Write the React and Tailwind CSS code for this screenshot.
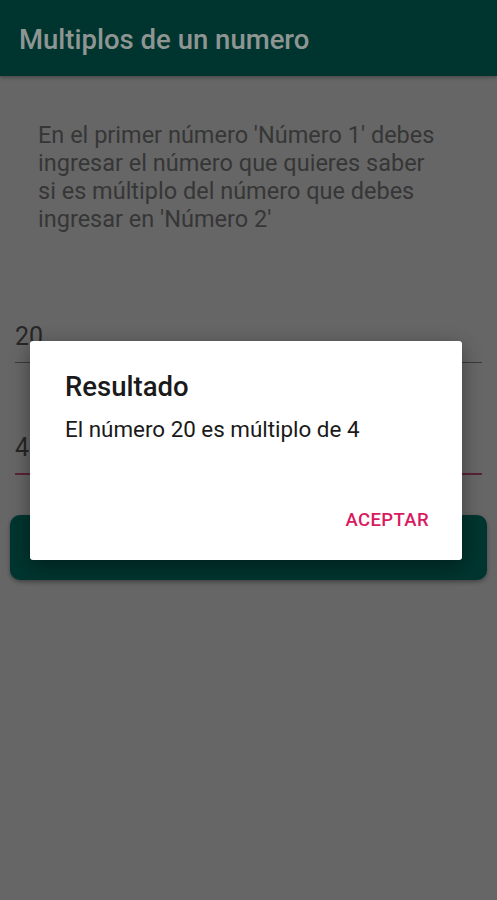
export default function App() {
  return (
    <div className="relative w-[497px] h-[900px] bg-[#666666] overflow-hidden" style={{ fontFamily: 'Roboto, "Noto Sans", sans-serif' }}>
      {/* app bar */}
      <header className="h-[76px] bg-[#00352f] flex items-center px-[19px] pt-[3px] shadow-[0_2px_3px_rgba(0,0,0,0.25)]">
        <h1 className="text-[27.5px] font-medium text-[#8f9593]">Multiplos de un numero</h1>
      </header>

      {/* form */}
      <main className="px-[15px]">
        <p className="w-[410px] pt-[45px] ml-[23px] text-[23.5px] leading-[28px] text-[#363636]">
          En el primer número 'Número 1' debes ingresar el número que quieres saber si es múltiplo del número que debes ingresar en 'Número 2'
        </p>

        <div className="mt-[86px] h-[44px] border-b-[1.5px] border-[#3a3a3a] flex items-end pb-[13px]">
          <span className="text-[25px] leading-none text-[#262626]">20</span>
        </div>

        <div className="mt-[68px] h-[44px] border-b-2 border-[#5a2236] flex items-end pb-[13px]">
          <span className="text-[25px] leading-none text-[#262626]">4</span>
          <span className="w-[2px] h-[42px] bg-[#5a2236] ml-[1px] mb-[-7px]" />
        </div>
      </main>

      <div className="mx-[10px] mt-[40px] h-[65px] rounded-[10px] bg-[#00352f] shadow-[0_2px_4px_rgba(0,0,0,0.35)]" />

      {/* dialog */}
      <div className="absolute inset-0 flex items-center justify-center pr-[5px]">
        <div className="w-[432px] h-[219px] bg-white rounded-[3px] shadow-[0_6px_20px_rgba(0,0,0,0.4)] flex flex-col pl-[35px] pr-[33px]">
          <h2 className="mt-[30px] text-[27.5px] font-medium leading-[32px] text-[#1a1a1a]">Resultado</h2>
          <p className="mt-[12px] text-[22.4px] leading-[28px] text-[#1a1a1a]">El número 20 es múltiplo de 4</p>
          <div className="mt-auto mb-[25px] flex justify-end">
            <button className="text-[18.5px] font-medium tracking-[0.4px] text-[#d81b60]">ACEPTAR</button>
          </div>
        </div>
      </div>
    </div>
  );
}
